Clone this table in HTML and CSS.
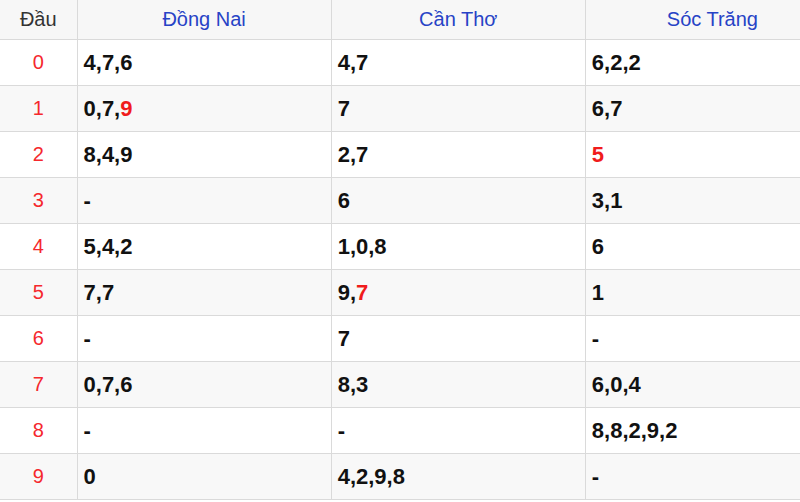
FILE: index.html
```html
<!DOCTYPE html>
<html lang="vi">
<head>
<meta charset="utf-8">
<title>Lô tô</title>
<link rel="stylesheet" href="styles.css">
</head>
<body>
<div class="wrap">
<table class="loto">
<colgroup><col class="c-head"><col class="c-prov"><col class="c-prov"><col class="c-prov"></colgroup>
<thead>
<tr><th class="dau">Đầu</th><th>Đồng Nai</th><th>Cần Thơ</th><th>Sóc Trăng</th></tr>
</thead>
<tbody>
<tr><td class="idx">0</td><td>4,7,6</td><td>4,7</td><td>6,2,2</td></tr>
<tr><td class="idx">1</td><td>0,7,<span class="hl">9</span></td><td>7</td><td>6,7</td></tr>
<tr><td class="idx">2</td><td>8,4,9</td><td>2,7</td><td><span class="hl">5</span></td></tr>
<tr><td class="idx">3</td><td>-</td><td>6</td><td>3,1</td></tr>
<tr><td class="idx">4</td><td>5,4,2</td><td>1,0,8</td><td>6</td></tr>
<tr><td class="idx">5</td><td>7,7</td><td>9,<span class="hl">7</span></td><td>1</td></tr>
<tr><td class="idx">6</td><td>-</td><td>7</td><td>-</td></tr>
<tr><td class="idx">7</td><td>0,7,6</td><td>8,3</td><td>6,0,4</td></tr>
<tr><td class="idx">8</td><td>-</td><td>-</td><td>8,8,2,9,2</td></tr>
<tr><td class="idx">9</td><td>0</td><td>4,2,9,8</td><td>-</td></tr>
</tbody>
</table>
</div>
</body>
</html>
```
FILE: styles.css
```css
html, body {
  margin: 0;
  padding: 0;
  background: #fff;
  overflow: hidden;
}
.wrap {
  width: 800px;
  height: 502px;
  overflow: hidden;
}
.loto {
  border-collapse: collapse;
  table-layout: fixed;
  width: 840px;
  font-family: "Liberation Sans", Arial, sans-serif;
}
.c-head { width: 77px; }
.c-prov { width: 254px; }
.loto th {
  height: 39px;
  padding: 0;
  font-size: 20px;
  font-weight: normal;
  color: #2743c6;
  background: #f7f7f7;
  text-align: center;
  vertical-align: middle;
  border: 1px solid #dadada;
  border-top: none;
}
.loto th.dau {
  color: #333;
  border-left: none;
}
.loto td {
  height: 45px;
  padding: 0 0 0 6px;
  font-size: 22px;
  font-weight: bold;
  color: #111;
  border: 1px solid #dadada;
  vertical-align: middle;
}
.loto td.idx {
  padding: 0;
  text-align: center;
  font-size: 20px;
  font-weight: normal;
  color: #f5282d;
  border-left: none;
}
.loto tbody tr:nth-child(even) td {
  background: #f8f8f8;
}
.hl {
  color: #f01c1c;
}
```
